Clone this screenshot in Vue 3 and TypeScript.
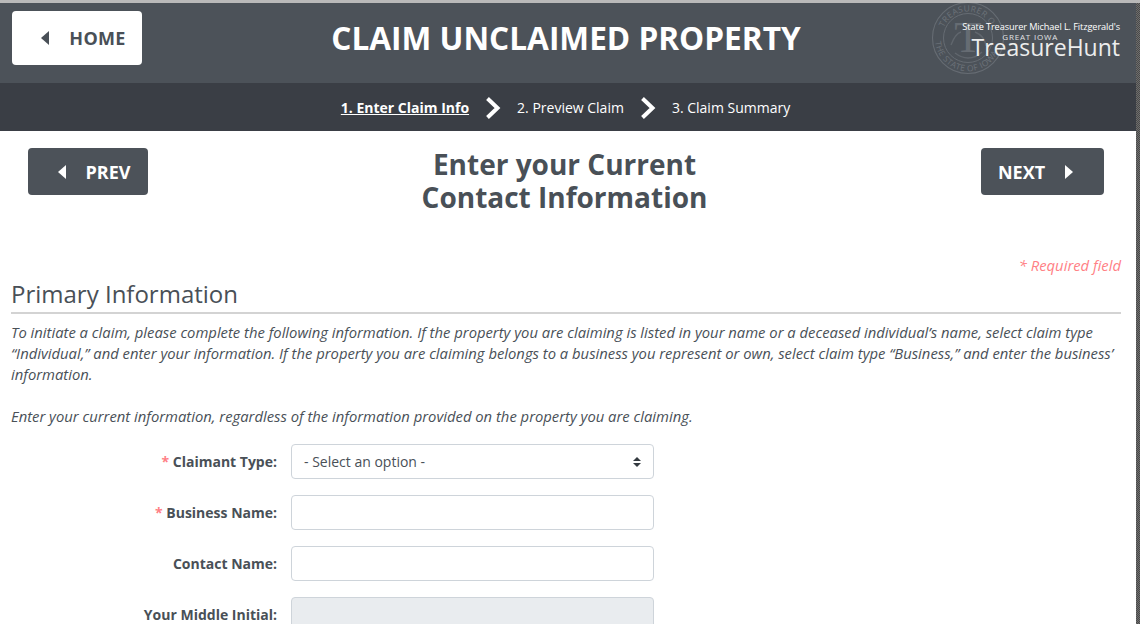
<script setup lang="ts">
const fields = [
  { label: 'Business Name:', req: true, disabled: false },
  { label: 'Contact Name:', req: false, disabled: false },
  { label: 'Your Middle Initial:', req: false, disabled: true },
]
</script>

<template>
  <div class="page">
    <div class="main">
      <header class="top">
        <button class="home"><span class="tri left dark"></span>HOME</button>
        <h1>CLAIM UNCLAIMED PROPERTY</h1>
        <div class="logo">
          <svg class="seal" width="74" height="74" viewBox="0 0 74 74" fill="none">
            <circle cx="37" cy="37" r="35.5" stroke="#666c73" stroke-width="1.1" />
            <circle cx="37" cy="37" r="24.5" stroke="#666c73" stroke-width="1" />
            <path id="sealtop" d="M12.8 26.5A26 26 0 0 1 60.2 25.2" />
            <path id="sealbot" d="M4.2 40.7A33 33 0 0 0 69.4 43.6" />
            <text font-size="8.4" fill="#6c7279" font-family="'Open Sans',sans-serif" letter-spacing=".4">
              <textPath href="#sealtop">TREASURER OF</textPath>
            </text>
            <text font-size="8.4" fill="#6c7279" font-family="'Open Sans',sans-serif" letter-spacing=".4">
              <textPath href="#sealbot">THE STATE OF IOWA</textPath>
            </text>
            <path d="M20 44c3-8 6-12 10-13M44 31c5 2 10 7 11 14M24 52c4 3 8 5 13 5s10-2 14-6" stroke="#60666d" stroke-width="1.4" />
            <text x="37" y="51" text-anchor="middle" font-size="45" fill="#666c73" font-family="'Liberation Serif',serif">T</text>
          </svg>
          <div class="logotext">
            <div class="l1">State Treasurer Michael L. Fitzgerald's</div>
            <div class="l2">GREAT IOWA</div>
            <div class="l3">TreasureHunt</div>
          </div>
        </div>
      </header>
      <nav class="steps">
        <a class="active">1. Enter Claim Info</a>
        <svg class="chev" width="16" height="24" viewBox="0 0 16 24" fill="none"><path d="M2.5 2.5 12.5 12 2.5 21.5" stroke="#fff" stroke-width="4" /></svg>
        <a>2. Preview Claim</a>
        <svg class="chev" width="16" height="24" viewBox="0 0 16 24" fill="none"><path d="M2.5 2.5 12.5 12 2.5 21.5" stroke="#fff" stroke-width="4" /></svg>
        <a>3. Claim Summary</a>
      </nav>
      <section class="titlebar">
        <button class="pn prev"><span class="tri left"></span>PREV</button>
        <h2>Enter your Current<br />Contact Information</h2>
        <button class="pn next">NEXT<span class="tri right"></span></button>
      </section>
      <div class="content">
        <p class="reqnote">* Required field</p>
        <h3>Primary Information</h3>
        <p class="intro">To initiate a claim, please complete the following information. If the property you are claiming is listed in your name or a deceased individual’s name, select claim type “Individual,” and enter your information. If the property you are claiming belongs to a business you represent or own, select claim type “Business,” and enter the business’ information.</p>
        <p class="intro second">Enter your current information, regardless of the information provided on the property you are claiming.</p>
        <form class="form">
          <div class="row">
            <label><span class="star">*</span> Claimant Type:</label>
            <div class="control select">
              <span>- Select an option -</span>
              <svg width="10" height="12" viewBox="0 0 10 12"><path d="M5 1 9 5H1zM5 11 1 7h8z" fill="#343a40" /></svg>
            </div>
          </div>
          <div v-for="f in fields" :key="f.label" class="row">
            <label><span v-if="f.req" class="star">*</span> {{ f.label }}</label>
            <div class="control" :class="{ disabled: f.disabled }"></div>
          </div>
        </form>
      </div>
    </div>
    <div class="edge"></div>
  </div>
</template>

<style>
html, body { margin: 0; height: 100%; overflow: hidden; background: #fff; }
</style>

<style scoped>
.page { display: flex; width: 1140px; height: 624px; overflow: hidden; font-family: "Open Sans", sans-serif; color: #495057; border-top: 3px solid #b9b9b9; box-sizing: border-box; }
.main { width: 1136px; flex: none; }
.edge { width: 4px; flex: none; background: repeating-conic-gradient(#4a4a4a 0 25%, #6e6e6e 0 50%) 0 0 / 2px 2px; }
.top { height: 80px; background: #4c5259; display: flex; align-items: flex-start; position: relative; padding: 8px 0 0 12px; box-sizing: border-box; }
.home { width: 130px; height: 54px; background: #fff; border: 0; border-radius: 4px; color: #495057; font: 700 18px "Open Sans", sans-serif; letter-spacing: .3px; display: flex; align-items: center; justify-content: center; gap: 20px; padding: 0 0 0 13px; }
.tri { display: inline-block; width: 0; height: 0; border-top: 7px solid transparent; border-bottom: 7px solid transparent; }
.tri.left { border-right: 8px solid #fff; }
.tri.right { border-left: 8px solid #fff; }
.tri.left.dark { border-right-color: #495057; }
h1 { position: absolute; left: 0; right: 4px; top: 13px; margin: 0; text-align: center; color: #fff; font-size: 31.6px; line-height: 44px; font-weight: 700; pointer-events: none; }
.logo { position: absolute; left: 931px; top: 0; width: 189px; height: 76px; }
.seal { position: absolute; left: 0; top: -2px; }
.logotext { position: absolute; right: 0; top: 18px; width: 160px; color: #fff; text-align: right; }
.l1 { font-size: 9.2px; line-height: 12px; white-space: nowrap; letter-spacing: -.1px; }
.l2 { font-size: 8px; line-height: 8px; text-align: right; letter-spacing: .8px; color: #e2e3e5; padding-right: 62px; }
.l3 { font-size: 23px; line-height: 22px; color: #eceded; margin-top: -5px; }
.steps { height: 48px; background: #3a3e45; display: flex; align-items: center; justify-content: center; color: #fff; font-size: 14px; padding-right: 5px; padding-top: 1px; box-sizing: border-box; }
.steps a { white-space: nowrap; }
.steps a.active { font-weight: 700; text-decoration: underline; }
.chev { margin: 0 16px; }
.titlebar { position: relative; height: 108px; display: flex; justify-content: space-between; align-items: flex-start; padding: 17px 32px 0 28px; box-sizing: border-box; }
.pn { height: 47px; background: #4c5259; border: 0; border-radius: 4px; color: #fff; font: 700 18px "Open Sans", sans-serif; display: flex; align-items: center; justify-content: center; }
.prev { width: 120px; gap: 20px; padding: 0 0 0 12px; }
.next { width: 123px; gap: 20px; padding: 0 14px 0 0; }
h2 { margin: 17px 0 0; position: absolute; left: 0; right: 0; top: 0; text-align: center; font-size: 28px; line-height: 33px; font-weight: 700; padding-right: 7px; color: #495057; }
.content { padding: 0 15px 0 11px; }
.reqnote { margin: 16px 0 0; text-align: right; color: #ff7f85; font-style: italic; font-size: 14.8px; line-height: 20px; }
h3 { margin: 2px 0 0; font-size: 24px; line-height: 34px; font-weight: 400; border-bottom: 2px solid #d3d3d3; padding-bottom: 1px; color: #495057; }
.intro { margin: 8px 0 0; font-style: italic; font-size: 14.8px; line-height: 21px; color: #495057; }
.intro.second { margin-top: 21px; }
.form { margin-top: 17px; display: flex; flex-direction: column; gap: 16px; }
.row { display: flex; align-items: center; height: 35px; }
label { width: 266px; text-align: right; font-size: 14px; font-weight: 700; white-space: nowrap; margin-right: 14px; }
.star { color: #ff7f85; }
.control { width: 363px; height: 35px; box-sizing: border-box; border: 1px solid #ced4da; border-radius: 4px; background: #fff; }
.control.disabled { background: #e9ecef; }
.select { display: flex; align-items: center; justify-content: space-between; padding: 0 11px 0 12px; font-size: 14px; color: #495057; }
</style>
